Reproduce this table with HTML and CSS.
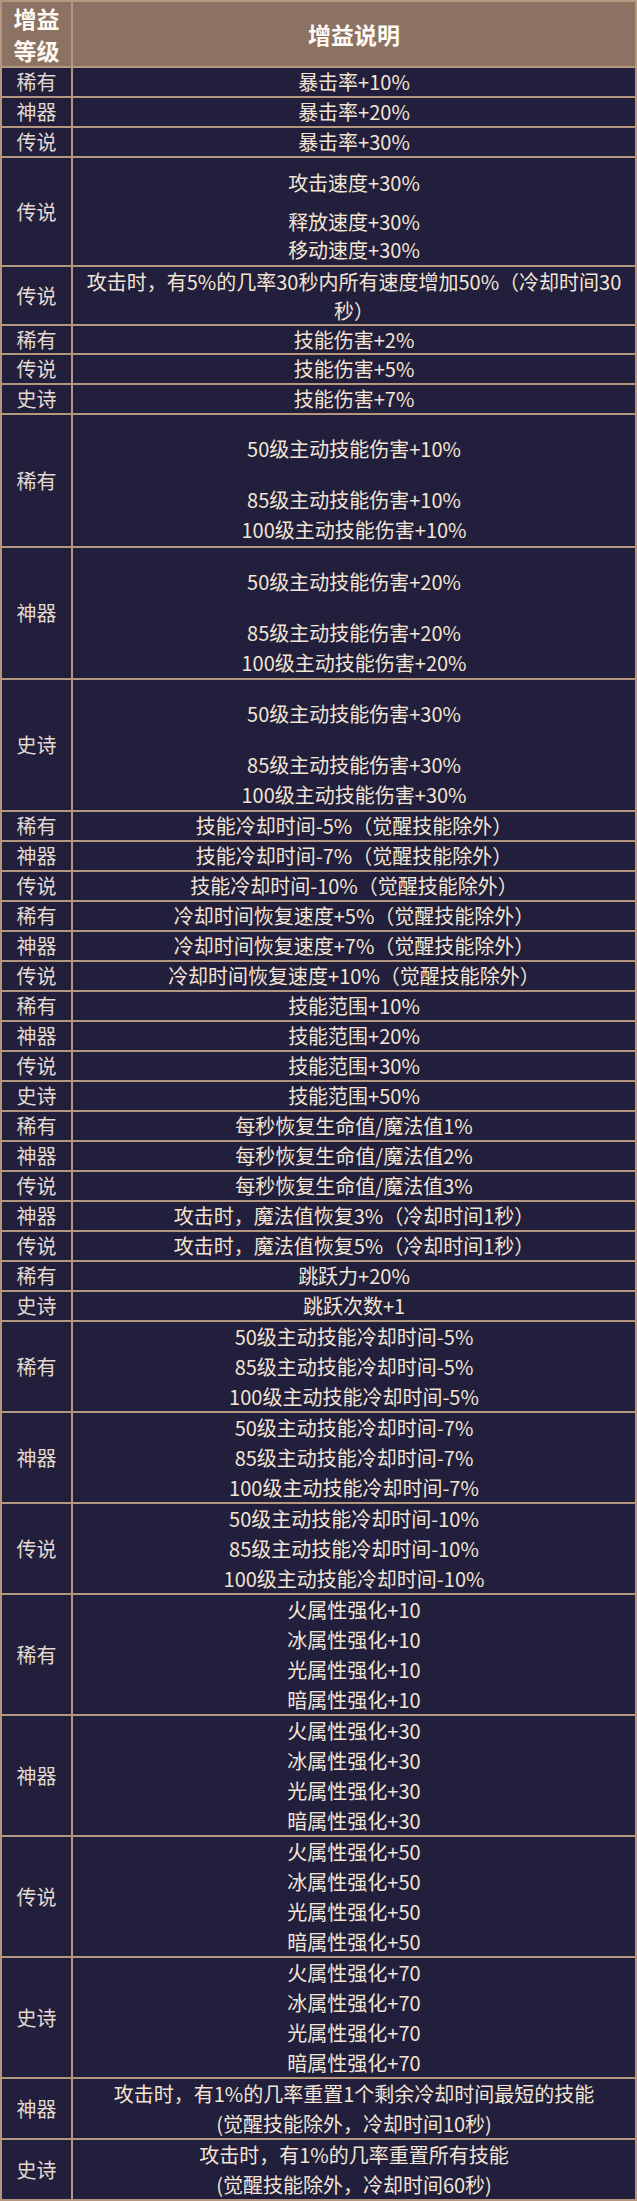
FILE: index.html
```html
<!DOCTYPE html>
<html lang="zh-CN">
<head>
<meta charset="utf-8">
<title>增益说明</title>
<link rel="stylesheet" href="styles.css">
</head>
<body>
<div class="table">
  <div class="row head">
    <div class="cell"><span>增益</span><span>等级</span></div>
    <div class="cell">增益说明</div>
  </div>

  <div class="row"><div class="cell lv">稀有</div><div class="cell">暴击率+10%</div></div>
  <div class="row"><div class="cell lv">神器</div><div class="cell">暴击率+20%</div></div>
  <div class="row"><div class="cell lv">传说</div><div class="cell">暴击率+30%</div></div>

  <div class="row h-speed">
    <div class="cell lv">传说</div>
    <div class="cell split-a">
      <span>攻击速度+30%</span>
      <span class="gap-a">释放速度+30%</span>
      <span>移动速度+30%</span>
    </div>
  </div>

  <div class="row h2a"><div class="cell lv">传说</div><div class="cell"><span>攻击时，有5%的几率30秒内所有速度增加50%（冷却时间30</span><span>秒）</span></div></div>

  <div class="row short"><div class="cell lv">稀有</div><div class="cell">技能伤害+2%</div></div>
  <div class="row"><div class="cell lv">传说</div><div class="cell">技能伤害+5%</div></div>
  <div class="row"><div class="cell lv">史诗</div><div class="cell">技能伤害+7%</div></div>

  <div class="row h-dmg first">
    <div class="cell lv">稀有</div>
    <div class="cell split-b">
      <span>50级主动技能伤害+10%</span>
      <span class="gap-b">85级主动技能伤害+10%</span>
      <span>100级主动技能伤害+10%</span>
    </div>
  </div>
  <div class="row h-dmg">
    <div class="cell lv">神器</div>
    <div class="cell split-b">
      <span>50级主动技能伤害+20%</span>
      <span class="gap-b">85级主动技能伤害+20%</span>
      <span>100级主动技能伤害+20%</span>
    </div>
  </div>
  <div class="row h-dmg">
    <div class="cell lv">史诗</div>
    <div class="cell split-b">
      <span>50级主动技能伤害+30%</span>
      <span class="gap-b">85级主动技能伤害+30%</span>
      <span>100级主动技能伤害+30%</span>
    </div>
  </div>

  <div class="row"><div class="cell lv">稀有</div><div class="cell">技能冷却时间-5%（觉醒技能除外）</div></div>
  <div class="row"><div class="cell lv">神器</div><div class="cell">技能冷却时间-7%（觉醒技能除外）</div></div>
  <div class="row"><div class="cell lv">传说</div><div class="cell">技能冷却时间-10%（觉醒技能除外）</div></div>
  <div class="row"><div class="cell lv">稀有</div><div class="cell">冷却时间恢复速度+5%（觉醒技能除外）</div></div>
  <div class="row"><div class="cell lv">神器</div><div class="cell">冷却时间恢复速度+7%（觉醒技能除外）</div></div>
  <div class="row"><div class="cell lv">传说</div><div class="cell">冷却时间恢复速度+10%（觉醒技能除外）</div></div>
  <div class="row"><div class="cell lv">稀有</div><div class="cell">技能范围+10%</div></div>
  <div class="row"><div class="cell lv">神器</div><div class="cell">技能范围+20%</div></div>
  <div class="row"><div class="cell lv">传说</div><div class="cell">技能范围+30%</div></div>
  <div class="row"><div class="cell lv">史诗</div><div class="cell">技能范围+50%</div></div>
  <div class="row"><div class="cell lv">稀有</div><div class="cell">每秒恢复生命值/魔法值1%</div></div>
  <div class="row"><div class="cell lv">神器</div><div class="cell">每秒恢复生命值/魔法值2%</div></div>
  <div class="row"><div class="cell lv">传说</div><div class="cell">每秒恢复生命值/魔法值3%</div></div>
  <div class="row"><div class="cell lv">神器</div><div class="cell">攻击时，魔法值恢复3%（冷却时间1秒）</div></div>
  <div class="row"><div class="cell lv">传说</div><div class="cell">攻击时，魔法值恢复5%（冷却时间1秒）</div></div>
  <div class="row"><div class="cell lv">稀有</div><div class="cell">跳跃力+20%</div></div>
  <div class="row"><div class="cell lv">史诗</div><div class="cell">跳跃次数+1</div></div>

  <div class="row h3">
    <div class="cell lv">稀有</div>
    <div class="cell"><span>50级主动技能冷却时间-5%</span><span>85级主动技能冷却时间-5%</span><span>100级主动技能冷却时间-5%</span></div>
  </div>
  <div class="row h3">
    <div class="cell lv">神器</div>
    <div class="cell"><span>50级主动技能冷却时间-7%</span><span>85级主动技能冷却时间-7%</span><span>100级主动技能冷却时间-7%</span></div>
  </div>
  <div class="row h3">
    <div class="cell lv">传说</div>
    <div class="cell"><span>50级主动技能冷却时间-10%</span><span>85级主动技能冷却时间-10%</span><span>100级主动技能冷却时间-10%</span></div>
  </div>

  <div class="row h4">
    <div class="cell lv">稀有</div>
    <div class="cell"><span>火属性强化+10</span><span>冰属性强化+10</span><span>光属性强化+10</span><span>暗属性强化+10</span></div>
  </div>
  <div class="row h4">
    <div class="cell lv">神器</div>
    <div class="cell"><span>火属性强化+30</span><span>冰属性强化+30</span><span>光属性强化+30</span><span>暗属性强化+30</span></div>
  </div>
  <div class="row h4">
    <div class="cell lv">传说</div>
    <div class="cell"><span>火属性强化+50</span><span>冰属性强化+50</span><span>光属性强化+50</span><span>暗属性强化+50</span></div>
  </div>
  <div class="row h4">
    <div class="cell lv">史诗</div>
    <div class="cell"><span>火属性强化+70</span><span>冰属性强化+70</span><span>光属性强化+70</span><span>暗属性强化+70</span></div>
  </div>

  <div class="row h2">
    <div class="cell lv">神器</div>
    <div class="cell"><span>攻击时，有1%的几率重置1个剩余冷却时间最短的技能</span><span>(觉醒技能除外，冷却时间10秒)</span></div>
  </div>
  <div class="row h2">
    <div class="cell lv">史诗</div>
    <div class="cell"><span>攻击时，有1%的几率重置所有技能</span><span>(觉醒技能除外，冷却时间60秒)</span></div>
  </div>
</div>
</body>
</html>
```

FILE: styles.css
```css
html, body {
  margin: 0;
  padding: 0;
  background: #211f3c;
}

.table {
  width: 637px;
  box-sizing: border-box;
  display: flex;
  flex-direction: column;
  gap: 2px;
  padding: 2px;
  background: #b5977f;
  font-family: "Noto Sans CJK SC", "Noto Sans", sans-serif;
}

.row {
  display: grid;
  grid-template-columns: 69px 1fr;
  gap: 2px;
  height: 28px;
}

.cell {
  background: #211f3c;
  color: #f3e4d4;
  font-size: 20px;
  line-height: 30px;
  display: flex;
  flex-direction: column;
  align-items: center;
  justify-content: center;
  white-space: nowrap;
  min-height: 0;
}

.cell.lv {
  color: #e3d9d1;
}

.head {
  height: 64px;
}

.head .cell {
  background: #8c7262;
  color: #fffaf4;
  font-weight: 700;
  font-size: 23px;
  line-height: 32px;
}

.short { height: 27px; }
.h2 { height: 59px; }
.h2a { height: 57px; }
.h2a .cell { line-height: 29px; }
.h3 { height: 89px; }
.h4 { height: 119px; }

.h-speed { height: 107px; }
.split-a {
  justify-content: flex-start;
  padding-top: 11px;
  line-height: 28px;
}
.gap-a { margin-top: 11px; }

.h-dmg { height: 130px; }
.h-dmg.first { height: 131px; }
.split-b {
  justify-content: flex-start;
  padding-top: 19px;
}
.gap-b { margin-top: 21px; }
```
